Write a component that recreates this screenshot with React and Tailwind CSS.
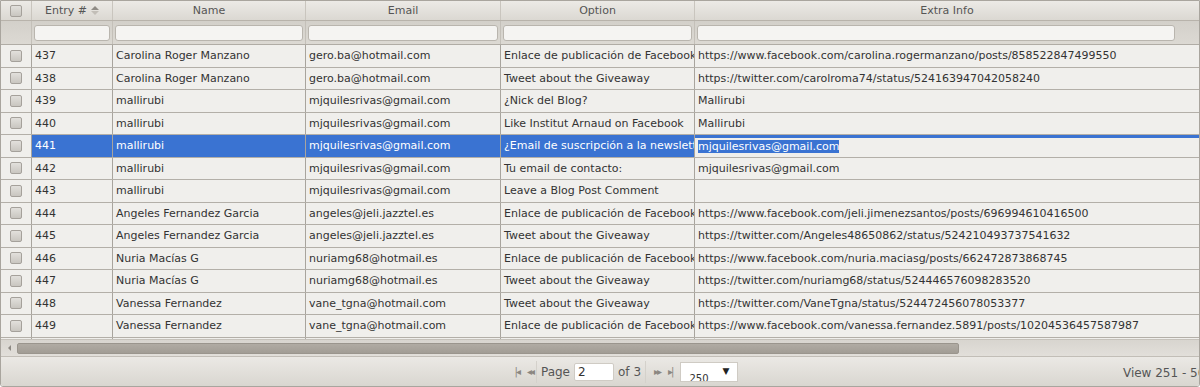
import React from "react";

const rows = [
  ["437", "Carolina Roger Manzano", "gero.ba@hotmail.com", "Enlace de publicación de Facebook", "https://www.facebook.com/carolina.rogermanzano/posts/858522847499550"],
  ["438", "Carolina Roger Manzano", "gero.ba@hotmail.com", "Tweet about the Giveaway", "https://twitter.com/carolroma74/status/524163947042058240"],
  ["439", "mallirubi", "mjquilesrivas@gmail.com", "¿Nick del Blog?", "Mallirubi"],
  ["440", "mallirubi", "mjquilesrivas@gmail.com", "Like Institut Arnaud on Facebook", "Mallirubi"],
  ["441", "mallirubi", "mjquilesrivas@gmail.com", "¿Email de suscripción a la newsletter?", "mjquilesrivas@gmail.com"],
  ["442", "mallirubi", "mjquilesrivas@gmail.com", "Tu email de contacto:", "mjquilesrivas@gmail.com"],
  ["443", "mallirubi", "mjquilesrivas@gmail.com", "Leave a Blog Post Comment", ""],
  ["444", "Angeles Fernandez Garcia", "angeles@jeli.jazztel.es", "Enlace de publicación de Facebook", "https://www.facebook.com/jeli.jimenezsantos/posts/696994610416500"],
  ["445", "Angeles Fernandez Garcia", "angeles@jeli.jazztel.es", "Tweet about the Giveaway", "https://twitter.com/Angeles48650862/status/524210493737541632"],
  ["446", "Nuria Macías G", "nuriamg68@hotmail.es", "Enlace de publicación de Facebook", "https://www.facebook.com/nuria.maciasg/posts/662472873868745"],
  ["447", "Nuria Macías G", "nuriamg68@hotmail.es", "Tweet about the Giveaway", "https://twitter.com/nuriamg68/status/524446576098283520"],
  ["448", "Vanessa Fernandez", "vane_tgna@hotmail.com", "Tweet about the Giveaway", "https://twitter.com/VaneTgna/status/524472456078053377"],
  ["449", "Vanessa Fernandez", "vane_tgna@hotmail.com", "Enlace de publicación de Facebook", "https://www.facebook.com/vanessa.fernandez.5891/posts/10204536457587987"],
];

const cols = "grid grid-cols-[31px_81px_193px_195px_194px_1fr]";

function Check() {
  return (
    <span className="block w-[12px] h-[12px] rounded-[2px] border border-[#a5a19b] bg-gradient-to-b from-[#e2e0dc] to-[#c9c6c0]" />
  );
}

function Cell({ children, sel, last }) {
  return (
    <div
      className={`h-full overflow-hidden whitespace-nowrap pl-[3px] leading-[22px] ${last ? "" : "border-r border-[#a8a49d]"} ${sel ? "bg-[#3a73d2] text-white" : ""}`}
    >
      {children}
    </div>
  );
}

function Row({ r, sel }) {
  return (
    <div className={`${cols} h-[22.5px] border-b border-[#b3afa8] bg-[#f0efec] text-[#333]`}>
      <div className="flex items-center justify-center border-r border-[#a8a49d]">
        <Check />
      </div>
      <Cell sel={sel}>{r[0]}</Cell>
      <Cell sel={sel}>{r[1]}</Cell>
      <Cell sel={sel}>{r[2]}</Cell>
      <Cell sel={sel}>{r[3]}</Cell>
      {sel ? (
        <div className="h-full overflow-hidden whitespace-nowrap pl-[3px] border-t-[3px] border-[#3a73d2] leading-[17px]">
          <span className="bg-[#3a73d2] text-white">{r[4]}</span>
        </div>
      ) : (
        <Cell last>{r[4]}</Cell>
      )}
    </div>
  );
}

function Filter({ last }) {
  return (
    <div className={`flex items-center px-[2px] ${last ? "pr-[24px]" : "border-r border-[#c4c0b9]"}`}>
      <div className="w-full h-[16px] rounded-[3px] border border-[#b9b5ae] bg-[#f5f4f2]" />
    </div>
  );
}

export default function App() {
  return (
    <div className="w-[1200px] h-[387px] overflow-hidden bg-white text-[11px]" style={{ fontFamily: '"DejaVu Sans", Verdana, sans-serif' }}>
      <div className="h-full flex flex-col border border-[#a9a59e] rounded-b-[3px] overflow-hidden">
        {/* header */}
        <div className={`${cols} h-[20px] shrink-0 bg-gradient-to-b from-[#eceae6] to-[#dbd8d2] border-b border-[#b8b3ab] text-[#555] text-center leading-[19px]`}>
          <div className="flex items-center justify-center border-r border-[#c9c5be]">
            <Check />
          </div>
          <div className="border-r border-[#c9c5be] flex items-center justify-center gap-[4px]">
            <span>Entry #</span>
            <span className="flex flex-col items-center gap-[1px]">
              <span className="block w-0 h-0 border-l-[4px] border-r-[4px] border-b-[4px] border-transparent border-b-[#8f8b85]" />
              <span className="block w-0 h-0 border-l-[4px] border-r-[4px] border-t-[4px] border-transparent border-t-[#c2beb7]" />
            </span>
          </div>
          <div className="border-r border-[#c9c5be]">Name</div>
          <div className="border-r border-[#c9c5be]">Email</div>
          <div className="border-r border-[#c9c5be]">Option</div>
          <div>Extra Info</div>
        </div>
        {/* filter row */}
        <div className={`${cols} h-[24px] shrink-0 bg-gradient-to-b from-[#d3d0ca] to-[#dcd9d3] border-b border-[#b0aca5]`}>
          <div className="border-r border-[#c4c0b9]" />
          <Filter />
          <Filter />
          <Filter />
          <Filter />
          <Filter last />
        </div>
        {/* rows */}
        <div className="flex-1 overflow-hidden bg-[#f0efec]">
          {rows.map((r) => (
            <Row key={r[0]} r={r} sel={r[0] === "441"} />
          ))}
          <div className={`${cols} h-[22px] bg-[#f0efec]`}>
            <div className="flex justify-center border-r border-[#a8a49d] pt-[1px]"><Check /></div>
            <div className="border-r border-[#a8a49d]" />
            <div className="border-r border-[#a8a49d]" />
            <div className="border-r border-[#a8a49d]" />
            <div className="border-r border-[#a8a49d]" />
            <div />
          </div>
        </div>
        {/* horizontal scrollbar */}
        <div className="h-[17px] shrink-0 flex items-center bg-gradient-to-b from-[#d8d5cf] to-[#e2dfda] border-t border-[#c6c2bb]">
          <div className="w-[16px] flex items-center justify-center">
            <span className="block w-0 h-0 border-t-[3px] border-b-[3px] border-r-[3px] border-transparent border-r-[#8d8983]" />
          </div>
          <div className="w-[942px] h-[11px] rounded-[2px] bg-gradient-to-b from-[#b0aba3] to-[#a29d95] border border-[#9a958d]" />
        </div>
        {/* pager */}
        <div className="h-[30px] shrink-0 flex items-center bg-gradient-to-b from-[#ebe9e5] to-[#d9d6d0] border-t border-[#c2beb7] text-[#555] relative">
          <div className="flex-1 flex items-center justify-center pl-[50px]">
            <div className="flex items-center gap-[8px] text-[10px] text-[#8b8781] px-[3px] tracking-[-2px]">
              <span>|◂</span>
              <span>◂◂</span>
            </div>
            <div className="flex items-center gap-[4px] text-[12px] px-[4px] border-l border-r border-[#d4d1cb] h-[22px]">
              <span>Page</span>
              <div className="w-[40px] h-[18px] bg-white border border-[#cfcbc4] rounded-[2px] leading-[16px] pl-[3px] text-[#333]">2</div>
              <span>of 3</span>
            </div>
            <div className="flex items-center gap-[8px] text-[10px] text-[#8b8781] px-[8px] tracking-[-2px]">
              <span>▸▸</span>
              <span>▸|</span>
            </div>
            <div className="w-[58px] h-[20px] bg-white border border-[#cfcbc4] flex items-end justify-between px-[8px] overflow-hidden">
              <span className="text-[10px] leading-[10px] text-[#333] translate-y-[3px]">250</span>
              <span className="text-[9px] self-center text-[#222]">▼</span>
            </div>
          </div>
          <div className="absolute right-[0px] top-[7px] whitespace-nowrap text-[12px] text-[#555] translate-x-[14px]">View 251 - 500</div>
        </div>
      </div>
    </div>
  );
}
